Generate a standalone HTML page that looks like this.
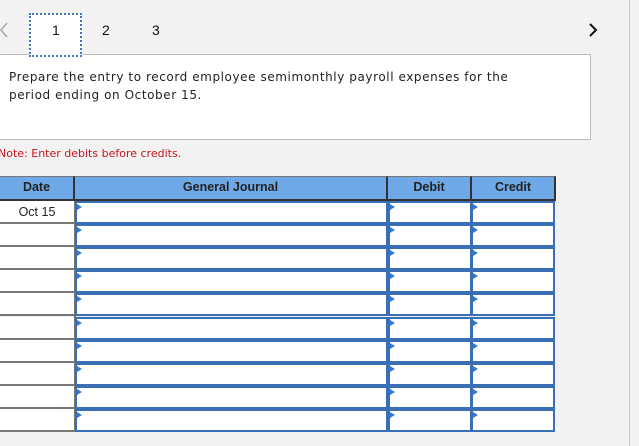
<!DOCTYPE html>
<html><head><style>
*{margin:0;padding:0;box-sizing:border-box}
body{width:639px;height:446px;background:#f2f2f2;position:relative;overflow:hidden;font-family:"DejaVu Sans",Verdana,sans-serif}
.a{position:absolute}
.vline{left:629px;top:0;width:1px;height:446px;background:#c8c8c8}
.tab{left:29px;top:13px;width:53px;height:44px;background:#fff;border:2px dotted #3a78c8}
.num{font-family:"Liberation Sans",Arial,sans-serif;font-size:14px;color:#111;top:22px}
.box{left:-1px;top:54px;width:592px;height:86px;background:#fff;border:1px solid #bdbdbd}
.prompt{left:9px;top:68px;font-size:12px;letter-spacing:0.58px;line-height:18px;color:#222;white-space:nowrap}
.note{left:-2px;top:147px;font-size:11px;letter-spacing:0;color:#c8141e}
.hdr{top:176px;height:25px;background:#6fa8e6;border-top:1px solid #777;border-bottom:2px solid #333;font-family:"Liberation Sans",Arial,sans-serif;font-weight:bold;font-size:12.5px;color:#222;text-align:center;line-height:21px}
.dc{left:0;width:74px;height:23px;border-bottom:2px solid #777;background:#fff;font-family:"Liberation Sans",Arial,sans-serif;font-size:12.5px;color:#222;text-align:center;line-height:22px}
.in{height:23px;background:#fff;border:2px solid #3a6fb5}
.in:before{content:"";position:absolute;left:0;top:1px;border-left:5px solid #2f7ad8;border-top:3px solid transparent;border-bottom:3px solid transparent}
</style></head><body>
<div class="a vline"></div>
<div class="a box"></div>
<div class="a tab"></div>
<svg class="a" style="left:0;top:22px" width="9" height="16"><path d="M7 1 L1 8 L7 15" stroke="#aaa" stroke-width="1.6" fill="none"/></svg>
<div class="a num" style="left:52px">1</div>
<div class="a num" style="left:102px">2</div>
<div class="a num" style="left:152px">3</div>
<svg class="a" style="left:588px;top:22px" width="10" height="16"><path d="M2 2 L8 8 L2 14" stroke="#111" stroke-width="2" fill="none"/></svg>
<div class="a prompt">Prepare the entry to record employee semimonthly payroll expenses for the<br>period ending on October 15.</div>
<div class="a note">Note: Enter debits before credits.</div>
<div class="a hdr" style="left:0;width:75px;border-right:2px solid #333">Date</div>
<div class="a hdr" style="left:75px;width:313px;border-right:2px solid #333">General Journal</div>
<div class="a hdr" style="left:388px;width:84px;border-right:2px solid #333">Debit</div>
<div class="a hdr" style="left:472px;width:84px;border-right:2px solid #333">Credit</div>
<div class="a" style="left:74px;top:201px;width:2px;height:231px;background:#777"></div>
<div id="rows"></div>
<script>
var h='';for(var i=0;i<10;i++){var t=201+i*23.1;
h+='<div class="a dc" style="top:'+t+'px">'+(i==0?'Oct 15':'')+'</div>';
h+='<div class="a in" style="left:75px;top:'+t+'px;width:313px"></div>';
h+='<div class="a in" style="left:388px;top:'+t+'px;width:84px"></div>';
h+='<div class="a in" style="left:471px;top:'+t+'px;width:84px"></div>';}
document.getElementById('rows').innerHTML=h;
</script>
</body></html>
